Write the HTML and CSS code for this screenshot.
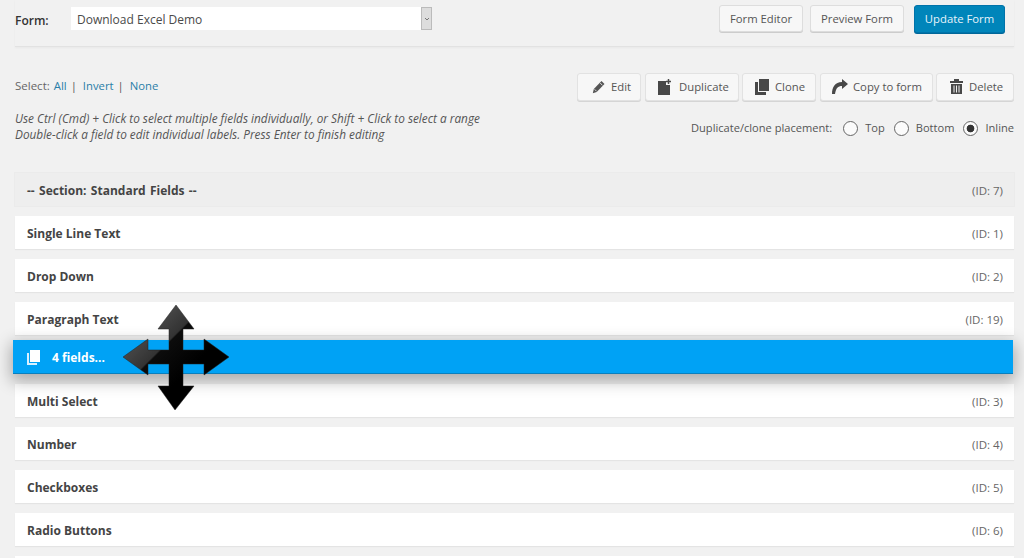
FILE: index.html
```html
<!DOCTYPE html>
<html lang="en">
<head>
<meta charset="utf-8">
<title>Form Field Bulk Actions</title>
<link rel="stylesheet" href="styles.css">
</head>
<body>
<main class="page">
  <header class="form-bar">
    <span class="form-label">Form:</span>
    <div class="select"><span class="select-value">Download Excel Demo</span><span class="select-arrow"><svg width="6" height="4" viewBox="0 0 6 4"><path d="M1 1l2 2 2-2" fill="none" stroke="#777" stroke-width="1"/></svg></span></div>
    <div class="form-actions">
      <a class="btn btn-editor">Form Editor</a>
      <a class="btn btn-preview">Preview Form</a>
      <a class="btn btn-primary">Update Form</a>
    </div>
  </header>

  <section class="controls">
    <div class="controls-left">
      <p class="select-links"><span class="select-label">Select:</span><a>All</a><span class="sep">|</span><a>Invert</a><span class="sep">|</span><a>None</a></p>
      <p class="help">Use Ctrl (Cmd) + Click to select multiple fields individually, or Shift + Click to select a range<br>Double-click a field to edit individual labels. Press Enter to finish editing</p>
    </div>
    <div class="controls-right">
      <div class="toolbar">
        <a class="btn tool tool-edit"><svg class="ico" width="13" height="14" viewBox="0 0 13 14"><path d="M9.500 1l3 3-7.800 8L.8 13.200 1.800 9z" fill="#555"/><path d="M8.200 3l2.200 2.300M2.600 9.300l2 2" stroke="#f7f7f7" stroke-width=".8"/></svg>Edit</a>
        <a class="btn tool tool-dup"><svg class="ico" width="14" height="16" viewBox="0 0 14 16"><path d="M0 2h8v4h4v10H0z" fill="#484848"/><path d="M10.500 0v5M8 2.500h5" stroke="#484848" stroke-width="1.500"/></svg>Duplicate</a>
        <a class="btn tool tool-clone"><svg class="ico" width="14" height="16" viewBox="0 0 14 16"><path d="M4 0h10v12H4z" fill="#484848"/><path d="M0 3h3v10h8v3H0z" fill="#484848"/></svg>Clone</a>
        <a class="btn tool tool-copy"><svg class="ico" width="16" height="15" viewBox="0 0 16 15"><path d="M10 0l6 5-6 5V7C6 7 4 9 3 15H0C0 8 3 3 10 3z" fill="#484848"/></svg>Copy to form</a>
        <a class="btn tool tool-del"><svg class="ico" width="13" height="15" viewBox="0 0 13 15"><path d="M0 2h4V0h5v2h4v2H0zM1 5h11v10H1z" fill="#484848"/><path d="M4 6.500v7M6.500 6.500v7M9 6.500v7" stroke="#f1f1f1" stroke-width="1"/></svg>Delete</a>
      </div>
      <div class="placement">
        <span class="placement-label">Duplicate/clone placement:</span>
        <span class="radio"></span><span class="radio-text">Top</span>
        <span class="radio"></span><span class="radio-text">Bottom</span>
        <span class="radio radio-on"></span><span class="radio-last">Inline</span>
      </div>
    </div>
  </section>

  <ul class="fields">
    <li class="field field-section"><b>-- Section: Standard Fields --</b><span>(ID: 7)</span></li>
    <li class="field"><b>Single Line Text</b><span>(ID: 1)</span></li>
    <li class="field"><b>Drop Down</b><span>(ID: 2)</span></li>
    <li class="field"><b>Paragraph Text</b><span>(ID: 19)</span></li>
    <li class="drop-slot">
      <div class="drag-bar">
        <svg width="14" height="15" viewBox="0 0 14 15"><path d="M4 0h10v12H4z" fill="#fff"/><path d="M1 3h2v10h8v2H1z" fill="#d8f0ff"/></svg>
        <b>4 fields...</b>
      </div>
    </li>
    <li class="field"><b>Multi Select</b><span>(ID: 3)</span></li>
    <li class="field"><b>Number</b><span>(ID: 4)</span></li>
    <li class="field"><b>Checkboxes</b><span>(ID: 5)</span></li>
    <li class="field"><b>Radio Buttons</b><span>(ID: 6)</span></li>
    <li class="field field-cut"></li>
  </ul>

  <svg class="move-cursor" width="108" height="108" viewBox="0 0 108 108">
    <defs>
      <linearGradient id="gloss" x1="0.1" y1="0.1" x2="0.62" y2="0.62">
        <stop offset="0" stop-color="#5a5a5a"/>
        <stop offset="0.55" stop-color="#333"/>
        <stop offset="0.57" stop-color="#0c0c0c"/>
        <stop offset="1" stop-color="#000"/>
      </linearGradient>
    </defs>
    <path d="M53 1L71 25H60V46H81V35L106 53 81 71V60H60V82H71L52 106 35 82H46V60H25V71L0 53 25 35V46H46V25H35Z" fill="url(#gloss)" stroke="#222" stroke-width="0.5"/>
  </svg>
</main>
</body>
</html>
```
FILE: styles.css
```css
* { box-sizing: border-box; }
html, body { margin: 0; height: 100%; overflow: hidden; }
body {
  background: #f1f1f1;
  color: #555;
  font-family: "Open Sans", "Noto Sans", sans-serif;
  font-size: 12px;
}
a { color: inherit; text-decoration: none; }
p { margin: 0; }

.page { position: relative; height: 558px; padding: 0 10px 0 15px; overflow: hidden; }

.form-bar {
  display: flex;
  align-items: flex-start;
  height: 47px;
  padding-top: 5px;
  border-bottom: 1px solid #e2e2e2;
  box-shadow: 0 1px 2px rgba(0,0,0,.04);
}
.form-label { width: 56px; margin-top: 7px; font-weight: 600; color: #333; }
.select {
  display: flex;
  width: 361px;
  height: 23px;
  margin-top: 2px;
  background: #fff;
  align-items: stretch;
}
.select-value { flex: 1; padding: 4px 0 0 6px; line-height: 18px; color: #4a4a4a; }
.select-arrow {
  width: 11px;
  display: flex;
  align-items: center;
  justify-content: center;
  background: #ddd;
  border: 1px solid #bbb;
}
.form-actions { display: flex; margin-left: auto; margin-right: 9px; }

.btn {
  display: flex;
  align-items: center;
  justify-content: center;
  height: 27px;
  padding-bottom: 1px;
  background: #f7f7f7;
  border: 1px solid #ddd;
  border-radius: 3px;
  box-shadow: 0 1px 0 #ccc;
  color: #555;
  font-size: 11.300px;
  white-space: nowrap;
}
.btn-editor { width: 84px; }
.btn-preview { width: 94px; margin-left: 7px; }
.btn-primary {
  width: 91px;
  height: 28px;
  margin-left: 10px;
  background: #0085ba;
  border-color: #0073aa;
  box-shadow: 0 1px 0 #006799;
  color: #e8f4fa;
}

.controls { display: flex; justify-content: space-between; height: 126px; padding-top: 26px; }
.select-links { display: flex; line-height: 18px; margin-top: 4px; font-size: 11.300px; }
.select-label { margin-right: 4px; font-size: 11.500px; color: #666; }
.select-links a { color: #2a7ea8; }
.sep { margin: 0 6px 0 4px; }
.help { margin-top: 15px; line-height: 16px; font-style: italic; font-size: 11.800px; color: #555; }

.toolbar { display: flex; justify-content: flex-end; }
.tool { height: 28px; justify-content: flex-start; border-color: #e2e2e2; box-shadow: 0 1px 0 #d5d5d5; }
.tool-edit { width: 64px; margin-right: 4px; padding-left: 14px; gap: 6px; }
.tool-dup { width: 94px; margin-right: 3px; padding-left: 12px; gap: 7px; }
.tool-clone { width: 74px; margin-right: 4px; padding-left: 12px; gap: 6px; }
.tool-copy { width: 113px; margin-right: 3px; padding-left: 11px; gap: 5px; }
.tool-del { width: 78px; padding-left: 13px; gap: 6px; }
.ico { flex: none; }

.placement { display: flex; align-items: center; justify-content: flex-end; margin-top: 17px; height: 20px; font-size: 11.100px; }
.placement-label { margin-right: 11px; padding-bottom: 1px; }
.radio {
  width: 15px;
  height: 15px;
  margin-right: 7px;
  border: 1px solid #666;
  border-radius: 50%;
  background: #fbfbfb;
  display: flex;
}
.radio-text { margin-right: 9px; padding-bottom: 1px; }
.radio-last { padding-bottom: 1px; }
.radio-on { background: radial-gradient(circle, #333 0 3.500px, #fbfbfb 4.200px); }

.fields { list-style: none; margin: 0; padding: 0; display: flex; flex-direction: column; gap: 10px; }
.field {
  display: flex;
  align-items: center;
  justify-content: space-between;
  flex: none;
  height: 33px;
  padding: 1px 11px 0 12px;
  background: #fff;
  box-shadow: 0 1px 1px rgba(0,0,0,.05);
}
.field b { font-weight: 700; color: #444; font-size: 12px; }
.field span { color: #666; font-size: 11.500px; }
.field-section { background: #eeeeee; box-shadow: 0 0 0 1px #ebebeb; }
.field-section b { word-spacing: 1.200px; }

.drop-slot { position: relative; height: 29px; flex: none; }
.drag-bar {
  position: absolute;
  left: -2px;
  top: -5px;
  width: 1000px;
  height: 34px;
  display: flex;
  align-items: center;
  gap: 12px;
  padding: 2px 0 0 13px;
  background: #00a2f5;
  border-bottom: 1px solid #0a7fbd;
  box-shadow: 0 5px 16px 2px rgba(0,0,0,.3);
  color: #fff;
}
.drag-bar b { font-size: 12px; font-weight: 700; }

.move-cursor { position: absolute; left: 123px; top: 304px; }
```
